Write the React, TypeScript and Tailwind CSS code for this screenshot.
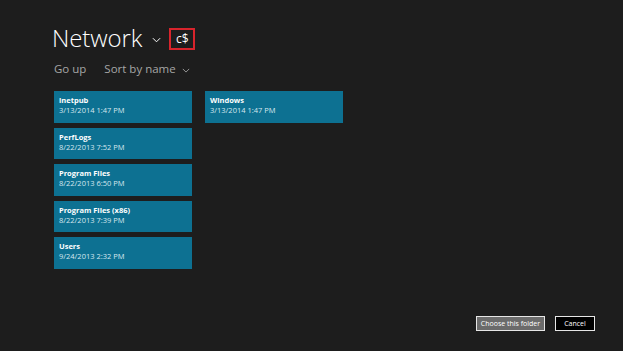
import React from 'react';

const leftFolders = [
  { name: 'inetpub', date: '3/13/2014 1:47 PM' },
  { name: 'PerfLogs', date: '8/22/2013 7:52 PM' },
  { name: 'Program Files', date: '8/22/2013 6:50 PM' },
  { name: 'Program Files (x86)', date: '8/22/2013 7:39 PM' },
  { name: 'Users', date: '9/24/2013 2:32 PM' },
];

const rightFolders = [{ name: 'Windows', date: '3/13/2014 1:47 PM' }];

function Chevron({ className }: { className?: string }) {
  return (
    <svg viewBox="0 0 10 6" className={className} fill="none" stroke="currentColor" strokeWidth="1.1">
      <path d="M1 1l4 4 4-4" />
    </svg>
  );
}

function FolderTile({ name, date }: { name: string; date: string }) {
  return (
    <div className="w-[138px] h-[31.5px] bg-[#0d7192] px-[5px] pt-[4px] leading-[10px]">
      <div className="text-[7.5px] font-bold text-white">{name}</div>
      <div className="text-[7.5px] text-[#d6e6ee]">{date}</div>
    </div>
  );
}

export default function App() {
  return (
    <div
      className="w-[623px] h-[351px] bg-[#1d1d1d] flex flex-col overflow-hidden"
      style={{ fontFamily: '"Open Sans", "Noto Sans", sans-serif' }}
    >
      {/* Header */}
      <div className="flex items-center pl-[52px] pt-[20px] h-[56px]">
        <span className="text-[24px] font-light text-white leading-none tracking-[-0.1px]">Network</span>
        <Chevron className="w-[9px] h-[6px] ml-[10px] mt-[4px] text-white" />
        <div className="ml-[8px] mt-[1px] w-[26px] h-[22px] border-2 border-[#d8242c] flex items-center justify-center">
          <span className="text-[12px] text-white leading-none">c$</span>
        </div>
      </div>

      {/* Toolbar */}
      <div className="flex items-center pl-[54px] mt-[5px] h-[16px] text-[11.5px] text-[#a6a6a6]">
        <span>Go up</span>
        <span className="ml-[18px]">Sort by name</span>
        <Chevron className="w-[8px] h-[5px] ml-[6px] mt-[2px] text-[#a6a6a6]" />
      </div>

      {/* Folder grid */}
      <div className="flex gap-[13px] pl-[54px] mt-[14px]">
        <div className="flex flex-col gap-[5px]">
          {leftFolders.map(f => (
            <FolderTile key={f.name} {...f} />
          ))}
        </div>
        <div className="flex flex-col gap-[5px]">
          {rightFolders.map(f => (
            <FolderTile key={f.name} {...f} />
          ))}
        </div>
      </div>

      {/* Buttons */}
      <div className="mt-auto mb-[20px] flex justify-end gap-[10px] pr-[28px]">
        <button className="w-[69px] h-[15px] bg-[#6b6b6b] border border-[#e6e6e6] text-[7px] text-white leading-none">
          Choose this folder
        </button>
        <button className="w-[40px] h-[15px] bg-black border border-[#e6e6e6] text-[7px] text-white leading-none">
          Cancel
        </button>
      </div>
    </div>
  );
}
